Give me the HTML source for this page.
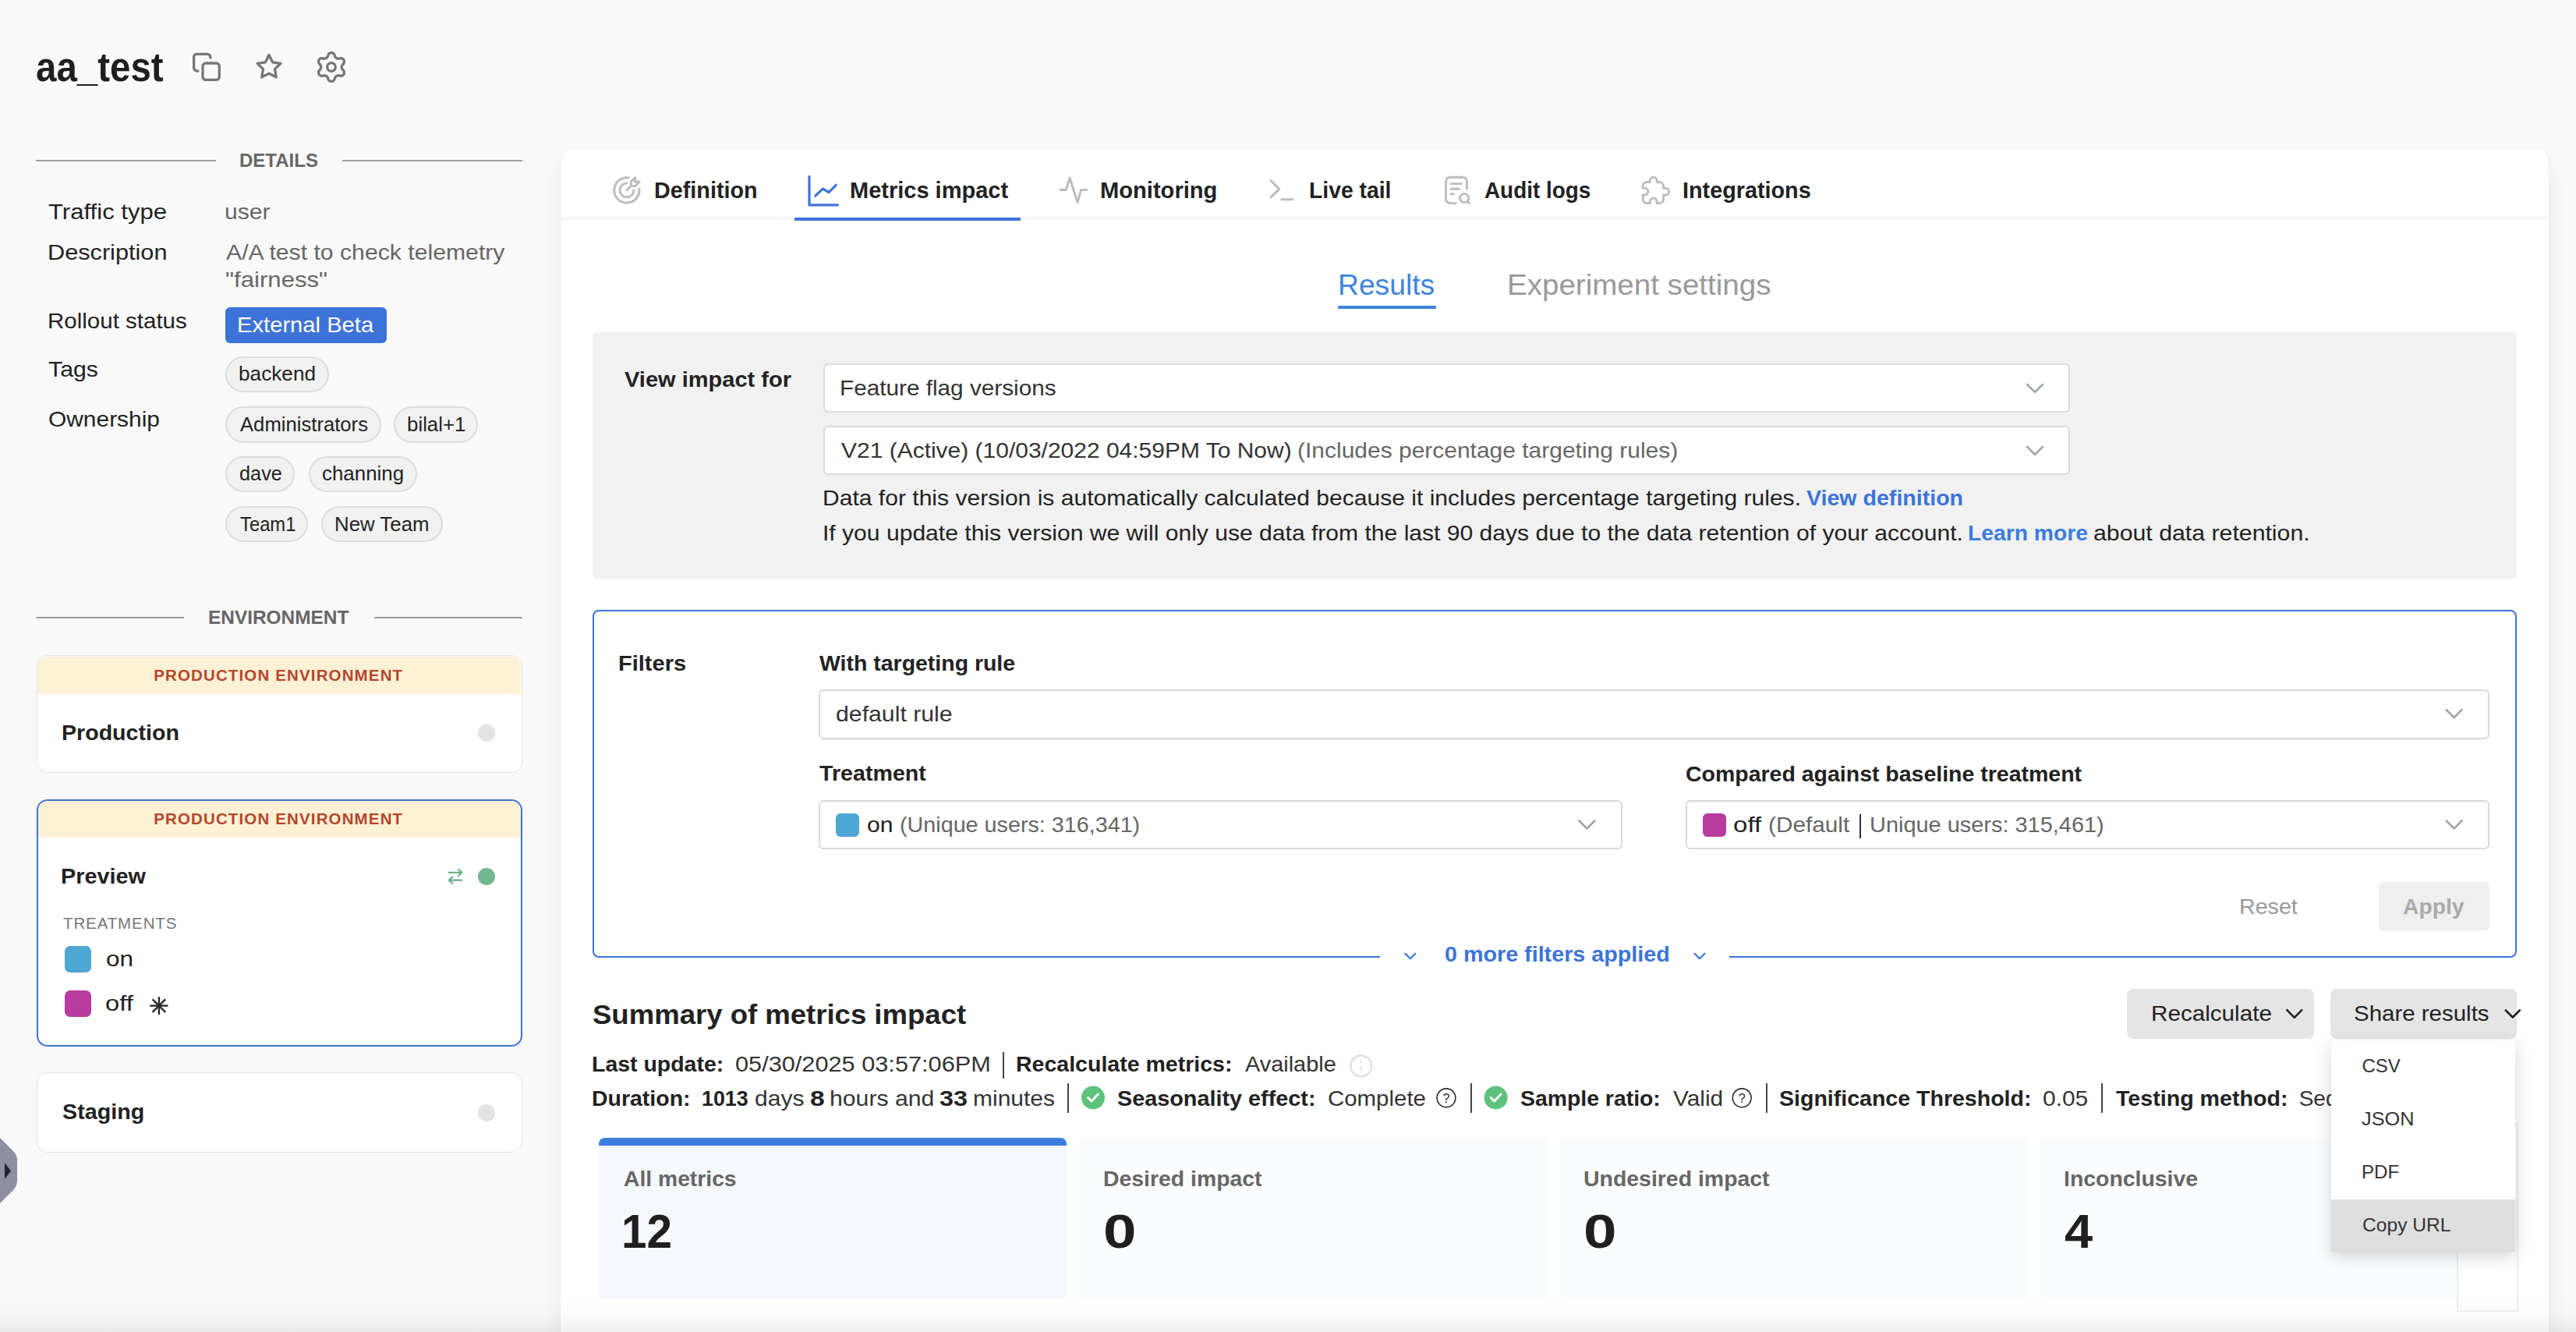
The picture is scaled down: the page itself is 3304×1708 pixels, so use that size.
<!DOCTYPE html>
<html><head><meta charset="utf-8"><title>aa_test</title>
<style>
html,body{margin:0;padding:0;}
body{width:3304px;height:1708px;overflow:hidden;position:relative;background:#f9f9f9;font-family:"Liberation Sans",sans-serif;}
.b{position:absolute;}
.t{position:absolute;white-space:pre;line-height:1;transform-origin:0 0;}
.ov{position:absolute;left:0;top:0;pointer-events:none;}
.fade{position:absolute;left:0;top:1662px;width:3304px;height:46px;background:linear-gradient(to bottom,rgba(0,0,0,0),rgba(0,0,0,0.01) 50%,rgba(0,0,0,0.058));}
</style></head><body>
<div class="b" style="left:717.5px;top:191.5px;width:2552.0px;height:1608.5px;background:#fff;border-left:1.5px solid #ececec;border-right:1.5px solid #ededed;box-sizing:border-box;border-radius:14px;box-shadow:0 24px 28px rgba(0,0,0,0.065);"></div><div class="b" style="left:46.0px;top:205.0px;width:231.0px;height:2.0px;background:#9c9c9c;"></div><div class="b" style="left:439.0px;top:205.0px;width:231.0px;height:2.0px;background:#9c9c9c;"></div><div class="b" style="left:46.0px;top:790.5px;width:190.0px;height:2.0px;background:#9c9c9c;"></div><div class="b" style="left:480.0px;top:790.5px;width:190.0px;height:2.0px;background:#9c9c9c;"></div><div class="b" style="left:289.0px;top:394.0px;width:207.0px;height:46.0px;background:#3d73d8;border-radius:6px;"></div><div class="b" style="left:289.0px;top:456.6px;width:132.6px;height:46.8px;background:#f1f1f1;border:2px solid #dcdcdc;border-radius:24px;box-sizing:border-box;"></div><div class="b" style="left:289.0px;top:520.5px;width:199.6px;height:47.2px;background:#f1f1f1;border:2px solid #dcdcdc;border-radius:24px;box-sizing:border-box;"></div><div class="b" style="left:505.4px;top:520.5px;width:107.2px;height:47.2px;background:#f1f1f1;border:2px solid #dcdcdc;border-radius:24px;box-sizing:border-box;"></div><div class="b" style="left:289.0px;top:584.5px;width:89.4px;height:46.9px;background:#f1f1f1;border:2px solid #dcdcdc;border-radius:24px;box-sizing:border-box;"></div><div class="b" style="left:395.5px;top:584.5px;width:139.9px;height:46.9px;background:#f1f1f1;border:2px solid #dcdcdc;border-radius:24px;box-sizing:border-box;"></div><div class="b" style="left:289.0px;top:648.5px;width:106.0px;height:46.8px;background:#f1f1f1;border:2px solid #dcdcdc;border-radius:24px;box-sizing:border-box;"></div><div class="b" style="left:412.3px;top:648.5px;width:155.3px;height:46.8px;background:#f1f1f1;border:2px solid #dcdcdc;border-radius:24px;box-sizing:border-box;"></div><div class="b" style="left:46.5px;top:840.0px;width:623.0px;height:151.3px;background:#fff;border:1.6px solid #e5e5e5;border-radius:14px;box-sizing:border-box;"></div><div class="b" style="left:48.0px;top:841.6px;width:620.0px;height:48.1px;background:#fdf1d5;border-radius:12.5px 12.5px 0 0;"></div><div class="b" style="left:46.5px;top:1024.5px;width:623.0px;height:317.0px;background:#fff;border:2px solid #3d73d8;border-radius:14px;box-sizing:border-box;"></div><div class="b" style="left:48.5px;top:1026.5px;width:619.0px;height:47.3px;background:#fdf1d5;border-radius:12px 12px 0 0;"></div><div class="b" style="left:46.5px;top:1374.5px;width:623.0px;height:103.5px;background:#fff;border:1.6px solid #e5e5e5;border-radius:14px;box-sizing:border-box;"></div><div class="b" style="left:613.2px;top:929.2px;width:21.6px;height:21.6px;background:#e3e3e3;border-radius:50%;"></div><div class="b" style="left:613.2px;top:1113.2px;width:21.6px;height:21.6px;background:#72b88e;border-radius:50%;"></div><div class="b" style="left:613.2px;top:1416.0px;width:21.6px;height:21.6px;background:#e3e3e3;border-radius:50%;"></div><div class="b" style="left:83.0px;top:1213.0px;width:34.0px;height:33.6px;background:#4fa7d3;border-radius:7px;"></div><div class="b" style="left:83.0px;top:1270.0px;width:34.0px;height:33.7px;background:#b83ba0;border-radius:7px;"></div><div class="b" style="left:719.0px;top:278.0px;width:2549.0px;height:4.0px;background:#f7f7f7;"></div><div class="b" style="left:1019.0px;top:279.0px;width:290.0px;height:3.5px;background:#3d73d8;"></div><div class="b" style="left:1715.5px;top:392.0px;width:126.1px;height:4.0px;background:#3f82dd;border-radius:2px 2px 0 0;"></div><div class="b" style="left:760.0px;top:425.8px;width:2468.0px;height:316.2px;background:#f1f1f1;border-radius:6px;"></div><div class="b" style="left:1056.0px;top:465.5px;width:1599.0px;height:63.5px;background:#fff;border:2px solid #dadada;border-radius:6px;box-sizing:border-box;"></div><div class="b" style="left:1056.0px;top:546.3px;width:1599.0px;height:62.7px;background:#fff;border:2px solid #dadada;border-radius:6px;box-sizing:border-box;"></div><div class="b" style="left:760.0px;top:782.3px;width:2468.0px;height:445.4px;border:2px solid #3d73d8;border-radius:8px;box-sizing:border-box;"></div><div class="b" style="left:1770.0px;top:1221.0px;width:447.6px;height:10.0px;background:#fff;"></div><div class="b" style="left:1049.8px;top:884.3px;width:2143.2px;height:64.0px;background:#fff;border:2px solid #dadada;border-radius:6px;box-sizing:border-box;"></div><div class="b" style="left:1049.8px;top:1026.0px;width:1031.2px;height:63.3px;background:#fff;border:2px solid #dadada;border-radius:6px;box-sizing:border-box;"></div><div class="b" style="left:2162.0px;top:1026.0px;width:1031.0px;height:63.3px;background:#fff;border:2px solid #dadada;border-radius:6px;box-sizing:border-box;"></div><div class="b" style="left:1072.0px;top:1042.9px;width:29.7px;height:29.9px;background:#4fa7d3;border-radius:6px;"></div><div class="b" style="left:2183.8px;top:1042.9px;width:30.2px;height:29.9px;background:#b83ba0;border-radius:6px;"></div><div class="b" style="left:2385.2px;top:1043.5px;width:2.2px;height:31.5px;background:#333;"></div><div class="b" style="left:3051.4px;top:1130.5px;width:141.6px;height:62.8px;background:#efefef;border-radius:6px;"></div><div class="b" style="left:2728.0px;top:1268.0px;width:240.0px;height:63.6px;background:#e5e5e5;border-radius:8px;"></div><div class="b" style="left:2988.5px;top:1268.0px;width:239.5px;height:63.6px;background:#e5e5e5;border-radius:8px;"></div><div class="b" style="left:1286.0px;top:1348.5px;width:2.0px;height:34.2px;background:#444;"></div><div class="b" style="left:1368.8px;top:1389.0px;width:2.0px;height:37.8px;background:#444;"></div><div class="b" style="left:1885.8px;top:1389.0px;width:2.0px;height:37.8px;background:#444;"></div><div class="b" style="left:2265.0px;top:1389.0px;width:2.0px;height:37.8px;background:#444;"></div><div class="b" style="left:2695.0px;top:1389.0px;width:2.0px;height:37.8px;background:#444;"></div><div class="b" style="left:768.0px;top:1459.2px;width:600.0px;height:207.2px;background:#f5f8fd;border-radius:8px;overflow:hidden;"></div><div class="b" style="left:768.0px;top:1459.2px;width:600.0px;height:10.0px;background:#3b7ddd;border-radius:8px 8px 0 0;"></div><div class="b" style="left:1384.0px;top:1459.2px;width:600.0px;height:207.2px;background:#fbfcfe;border-radius:8px;"></div><div class="b" style="left:2000.0px;top:1459.2px;width:600.0px;height:207.2px;background:#fbfcfe;border-radius:8px;"></div><div class="b" style="left:2616.0px;top:1459.2px;width:600.0px;height:207.2px;background:#fbfcfe;border-radius:8px;"></div><div class="b" style="left:3150.5px;top:1441.0px;width:79.1px;height:241.0px;background:#fff;border:2px solid #eeeeee;box-sizing:border-box;"></div>
<div class="t" style="left:46.1px;top:61.3px;font-size:51px;color:#1f1f1f;transform:scaleX(0.9310);font-weight:700;">aa_test</div><div class="t" style="left:307.0px;top:193.5px;font-size:24px;color:#666;font-weight:700;">DETAILS</div><div class="t" style="left:61.9px;top:258.0px;font-size:28px;color:#222;transform:scaleX(1.1111);">Traffic type</div><div class="t" style="left:60.8px;top:310.3px;font-size:28px;color:#222;transform:scaleX(1.0956);">Description</div><div class="t" style="left:60.9px;top:398.3px;font-size:28px;color:#222;transform:scaleX(1.0539);">Rollout status</div><div class="t" style="left:61.9px;top:459.9px;font-size:28px;color:#222;transform:scaleX(1.0807);">Tags</div><div class="t" style="left:61.9px;top:523.9px;font-size:28px;color:#222;transform:scaleX(1.0682);">Ownership</div><div class="t" style="left:287.8px;top:258.0px;font-size:28px;color:#666;transform:scaleX(1.0769);">user</div><div class="t" style="left:290.0px;top:310.3px;font-size:28px;color:#666;transform:scaleX(1.0783);">A/A test to check telemetry</div><div class="t" style="left:288.9px;top:345.0px;font-size:28px;color:#666;transform:scaleX(1.1121);">&quot;fairness&quot;</div><div class="t" style="left:303.6px;top:402.8px;font-size:28px;color:#fff;transform:scaleX(1.0422);">External Beta</div><div class="t" style="left:305.7px;top:467.1px;font-size:25.5px;color:#222;transform:scaleX(1.0269);">backend</div><div class="t" style="left:307.8px;top:532.0px;font-size:25.5px;color:#222;transform:scaleX(1.0062);">Administrators</div><div class="t" style="left:522.0px;top:532.0px;font-size:25.5px;color:#222;transform:scaleX(1.0141);">bilal+1</div><div class="t" style="left:306.8px;top:595.4px;font-size:25.5px;color:#222;transform:scaleX(0.9925);">dave</div><div class="t" style="left:413.4px;top:595.4px;font-size:25.5px;color:#222;transform:scaleX(1.0158);">channing</div><div class="t" style="left:307.8px;top:659.6px;font-size:25.5px;color:#222;transform:scaleX(0.9333);">Team1</div><div class="t" style="left:429.0px;top:659.6px;font-size:25.5px;color:#222;transform:scaleX(1.0128);">New Team</div><div class="t" style="left:266.8px;top:779.7px;font-size:24px;color:#666;transform:scaleX(1.0171);font-weight:700;">ENVIRONMENT</div><div class="t" style="left:197.2px;top:856.1px;font-size:20.5px;color:#b5462a;letter-spacing:1.14px;font-weight:700;">PRODUCTION ENVIRONMENT</div><div class="t" style="left:78.5px;top:926.1px;font-size:28px;color:#222;transform:scaleX(1.0208);font-weight:700;">Production</div><div class="t" style="left:197.2px;top:1039.9px;font-size:20.5px;color:#b5462a;letter-spacing:1.14px;font-weight:700;">PRODUCTION ENVIRONMENT</div><div class="t" style="left:78.4px;top:1110.2px;font-size:28px;color:#222;transform:scaleX(1.0288);font-weight:700;">Preview</div><div class="t" style="left:81.0px;top:1174.2px;font-size:20.5px;color:#777;letter-spacing:0.89px;">TREATMENTS</div><div class="t" style="left:135.5px;top:1216.0px;font-size:28px;color:#222;transform:scaleX(1.1250);">on</div><div class="t" style="left:135.4px;top:1273.1px;font-size:28px;color:#222;transform:scaleX(1.1667);">off</div><div class="t" style="left:79.5px;top:1412.1px;font-size:28px;color:#222;transform:scaleX(1.0250);font-weight:700;">Staging</div><div class="t" style="left:839.0px;top:229.5px;font-size:29px;color:#222;transform:scaleX(0.9923);font-weight:700;">Definition</div><div class="t" style="left:1090.0px;top:229.5px;font-size:29px;color:#222;font-weight:700;">Metrics impact</div><div class="t" style="left:1411.0px;top:229.5px;font-size:29px;color:#222;transform:scaleX(1.0041);font-weight:700;">Monitoring</div><div class="t" style="left:1679.0px;top:229.5px;font-size:29px;color:#222;transform:scaleX(0.9769);font-weight:700;">Live tail</div><div class="t" style="left:1904.0px;top:229.5px;font-size:29px;color:#222;transform:scaleX(0.9607);font-weight:700;">Audit logs</div><div class="t" style="left:2158.0px;top:229.5px;font-size:29px;color:#222;transform:scaleX(0.9920);font-weight:700;">Integrations</div><div class="t" style="left:1716.2px;top:347.5px;font-size:36px;color:#3e84dc;transform:scaleX(1.0345);">Results</div><div class="t" style="left:1932.8px;top:347.5px;font-size:36px;color:#999;transform:scaleX(1.0705);">Experiment settings</div><div class="t" style="left:801.0px;top:473.3px;font-size:28px;color:#222;transform:scaleX(1.0364);font-weight:700;">View impact for</div><div class="t" style="left:1076.9px;top:484.1px;font-size:28px;color:#333;transform:scaleX(1.0618);">Feature flag versions</div><div class="t" style="left:1079.0px;top:564.3px;font-size:28px;color:#333;transform:scaleX(1.0706);">V21 (Active) (10/03/2022 04:59PM To Now)</div><div class="t" style="left:1663.7px;top:564.3px;font-size:28px;color:#666;transform:scaleX(1.0706);">(Includes percentage targeting rules)</div><div class="t" style="left:1054.5px;top:624.6px;font-size:28px;color:#222;transform:scaleX(1.0737);">Data for this version is automatically calculated because it includes percentage targeting rules.</div><div class="t" style="left:2317.4px;top:624.6px;font-size:28px;color:#3b74d8;transform:scaleX(1.0204);font-weight:700;">View definition</div><div class="t" style="left:1054.5px;top:670.3px;font-size:28px;color:#222;transform:scaleX(1.0742);">If you update this version we will only use data from the last 90 days due to the data retention of your account.</div><div class="t" style="left:2524.0px;top:670.3px;font-size:28px;color:#3b7ddd;transform:scaleX(1.0100);font-weight:700;">Learn more</div><div class="t" style="left:2684.9px;top:670.3px;font-size:28px;color:#222;transform:scaleX(1.0810);">about data retention.</div><div class="t" style="left:792.9px;top:837.3px;font-size:28px;color:#222;transform:scaleX(1.0370);font-weight:700;">Filters</div><div class="t" style="left:1051.0px;top:836.8px;font-size:28px;color:#222;transform:scaleX(1.0163);font-weight:700;">With targeting rule</div><div class="t" style="left:1071.9px;top:902.1px;font-size:28px;color:#333;transform:scaleX(1.0803);">default rule</div><div class="t" style="left:1051.0px;top:978.1px;font-size:28px;color:#222;transform:scaleX(1.0224);font-weight:700;">Treatment</div><div class="t" style="left:1112.3px;top:1043.9px;font-size:28px;color:#222;transform:scaleX(1.0750);">on</div><div class="t" style="left:1153.6px;top:1043.9px;font-size:28px;color:#666;transform:scaleX(1.0259);">(Unique users: 316,341)</div><div class="t" style="left:2161.5px;top:979.3px;font-size:28px;color:#222;transform:scaleX(1.0171);font-weight:700;">Compared against baseline treatment</div><div class="t" style="left:2223.1px;top:1043.9px;font-size:28px;color:#222;transform:scaleX(1.1800);">off</div><div class="t" style="left:2267.7px;top:1043.9px;font-size:28px;color:#666;transform:scaleX(1.0625);">(Default</div><div class="t" style="left:2397.9px;top:1043.9px;font-size:28px;color:#666;transform:scaleX(1.0330);">Unique users: 315,461)</div><div class="t" style="left:2872.0px;top:1148.9px;font-size:28px;color:#999;transform:scaleX(1.0225);">Reset</div><div class="t" style="left:3082.0px;top:1148.9px;font-size:28px;color:#aaa;transform:scaleX(1.0091);font-weight:700;">Apply</div><div class="t" style="left:1853.0px;top:1210.0px;font-size:28px;color:#3b74d8;transform:scaleX(1.0251);font-weight:700;">0 more filters applied</div><div class="t" style="left:760.0px;top:1283.2px;font-size:35px;color:#222;transform:scaleX(1.0437);font-weight:700;">Summary of metrics impact</div><div class="t" style="left:2758.5px;top:1286.3px;font-size:28px;color:#222;transform:scaleX(1.0587);">Recalculate</div><div class="t" style="left:3019.4px;top:1286.3px;font-size:28px;color:#222;transform:scaleX(1.0521);">Share results</div><div class="t" style="left:759.0px;top:1351.2px;font-size:28px;color:#222;transform:scaleX(1.0167);font-weight:700;">Last update:</div><div class="t" style="left:942.9px;top:1351.2px;font-size:28px;color:#333;transform:scaleX(1.0966);">05/30/2025 03:57:06PM</div><div class="t" style="left:1302.6px;top:1351.2px;font-size:28px;color:#222;transform:scaleX(1.0187);font-weight:700;">Recalculate metrics:</div><div class="t" style="left:1596.8px;top:1351.2px;font-size:28px;color:#333;transform:scaleX(1.0321);">Available</div><div class="t" style="left:759.0px;top:1394.7px;font-size:28px;color:#222;transform:scaleX(1.0167);font-weight:700;">Duration:</div><div class="t" style="left:899.6px;top:1394.7px;font-size:28px;color:#222;transform:scaleX(0.9583);font-weight:700;">1013</div><div class="t" style="left:968.1px;top:1394.7px;font-size:28px;color:#333;transform:scaleX(1.0737);">days</div><div class="t" style="left:1038.5px;top:1394.7px;font-size:28px;color:#222;transform:scaleX(1.2000);font-weight:700;">8</div><div class="t" style="left:1063.8px;top:1394.7px;font-size:28px;color:#333;transform:scaleX(1.0785);">hours and</div><div class="t" style="left:1205.3px;top:1394.7px;font-size:28px;color:#222;transform:scaleX(1.1552);font-weight:700;">33</div><div class="t" style="left:1247.9px;top:1394.7px;font-size:28px;color:#333;transform:scaleX(1.0716);">minutes</div><div class="t" style="left:1433.0px;top:1394.7px;font-size:28px;color:#222;transform:scaleX(1.0287);font-weight:700;">Seasonality effect:</div><div class="t" style="left:1703.3px;top:1394.7px;font-size:28px;color:#333;transform:scaleX(1.0508);">Complete</div><div class="t" style="left:1949.7px;top:1394.7px;font-size:28px;color:#222;transform:scaleX(1.0138);font-weight:700;">Sample ratio:</div><div class="t" style="left:2145.7px;top:1394.7px;font-size:28px;color:#333;transform:scaleX(1.0655);">Valid</div><div class="t" style="left:2281.7px;top:1394.7px;font-size:28px;color:#222;transform:scaleX(1.0191);font-weight:700;">Significance Threshold:</div><div class="t" style="left:2619.9px;top:1394.7px;font-size:28px;color:#333;transform:scaleX(1.0679);">0.05</div><div class="t" style="left:2713.6px;top:1394.7px;font-size:28px;color:#222;transform:scaleX(1.0221);font-weight:700;">Testing method:</div><div class="t" style="left:2948.7px;top:1394.7px;font-size:28px;color:#333;">Sequential</div><div class="t" style="left:800.0px;top:1498.3px;font-size:28px;color:#666;transform:scaleX(1.0099);font-weight:700;">All metrics</div><div class="t" style="left:797.2px;top:1548.2px;font-size:62px;color:#1f1f1f;transform:scaleX(0.9444);font-weight:700;">12</div><div class="t" style="left:1415.0px;top:1498.3px;font-size:28px;color:#666;transform:scaleX(1.0141);font-weight:700;">Desired impact</div><div class="t" style="left:1414.5px;top:1548.2px;font-size:62px;color:#1f1f1f;transform:scaleX(1.2333);font-weight:700;">0</div><div class="t" style="left:2031.0px;top:1498.3px;font-size:28px;color:#666;transform:scaleX(1.0155);font-weight:700;">Undesired impact</div><div class="t" style="left:2030.5px;top:1548.2px;font-size:62px;color:#1f1f1f;transform:scaleX(1.2333);font-weight:700;">0</div><div class="t" style="left:2647.0px;top:1498.3px;font-size:28px;color:#666;transform:scaleX(1.0144);font-weight:700;">Inconclusive</div><div class="t" style="left:2648.0px;top:1548.2px;font-size:62px;color:#1f1f1f;transform:scaleX(1.0485);font-weight:700;">4</div>
<svg class="ov" width="3304" height="1708" viewBox="0 0 3304 1708"><path d="M2600.0 492.8 L2610.0 502.8 L2620.0 492.8" fill="none" stroke="#9aa1ad" stroke-width="2.6" stroke-linecap="round" stroke-linejoin="round"/><path d="M2600.0 572.8 L2610.0 582.8 L2620.0 572.8" fill="none" stroke="#9aa1ad" stroke-width="2.6" stroke-linecap="round" stroke-linejoin="round"/><path d="M3137.6 910.2 L3147.6 920.2 L3157.6 910.2" fill="none" stroke="#9aa1ad" stroke-width="2.6" stroke-linecap="round" stroke-linejoin="round"/><path d="M2025.4 1052.4 L2035.4 1062.4 L2045.4 1052.4" fill="none" stroke="#9aa1ad" stroke-width="2.6" stroke-linecap="round" stroke-linejoin="round"/><path d="M3137.6 1052.4 L3147.6 1062.4 L3157.6 1052.4" fill="none" stroke="#9aa1ad" stroke-width="2.6" stroke-linecap="round" stroke-linejoin="round"/><path d="M1802.3 1222.8 L1808.8 1229.2 L1815.3 1222.8" fill="none" stroke="#3b74d8" stroke-width="2.2" stroke-linecap="round" stroke-linejoin="round"/><path d="M2173.5 1222.8 L2180.0 1229.2 L2186.5 1222.8" fill="none" stroke="#3b74d8" stroke-width="2.2" stroke-linecap="round" stroke-linejoin="round"/><path d="M2933.3 1295.2 L2942.8 1304.8 L2952.3 1295.2" fill="none" stroke="#222" stroke-width="2.6" stroke-linecap="round" stroke-linejoin="round"/><path d="M3213.8 1295.5 L3222.8 1304.5 L3231.8 1295.5" fill="none" stroke="#222" stroke-width="2.6" stroke-linecap="round" stroke-linejoin="round"/><g fill="none" stroke="#777" stroke-width="3.3" stroke-linecap="round" stroke-linejoin="round"><rect x="260" y="81" width="21.3" height="21.4" rx="4"/><path d="M253.8 91 Q248.6 91 248.6 86 V73.5 Q248.6 69.3 253 69.3 H265.5 Q269.9 69.3 269.9 74"/></g><g transform="translate(327,67.5) scale(1.5)" fill="none" stroke="#777" stroke-width="2.2" stroke-linecap="round" stroke-linejoin="round"><path d="M12 17.75l-6.172 3.245l1.179 -6.873l-5 -4.867l6.9 -1l3.086 -6.253l3.086 6.253l6.9 1l-5 4.867l1.179 6.873z"/></g><path d="M438.20 86.00 L438.21 85.77 L438.23 85.54 L438.27 85.30 L438.33 85.07 L438.40 84.83 L438.48 84.58 L438.59 84.33 L438.70 84.07 L438.84 83.81 L438.98 83.53 L439.15 83.25 L439.34 82.95 L439.55 82.64 L439.81 82.31 L440.26 81.91 L440.70 81.50 L440.94 81.13 L441.11 80.76 L441.25 80.41 L441.35 80.05 L441.42 79.70 L441.47 79.35 L441.49 79.00 L441.48 78.66 L441.45 78.33 L441.39 78.00 L441.31 77.69 L441.21 77.38 L441.08 77.08 L440.93 76.80 L440.76 76.53 L440.57 76.27 L440.36 76.03 L440.12 75.80 L439.87 75.59 L439.60 75.40 L439.31 75.22 L439.00 75.06 L438.67 74.93 L438.33 74.82 L437.97 74.73 L437.59 74.66 L437.19 74.63 L436.75 74.65 L436.17 74.83 L435.60 75.02 L435.19 75.08 L434.81 75.11 L434.46 75.12 L434.13 75.12 L433.82 75.11 L433.52 75.10 L433.24 75.07 L432.97 75.03 L432.71 74.98 L432.47 74.92 L432.24 74.85 L432.02 74.77 L431.80 74.68 L431.60 74.57 L431.40 74.45 L431.22 74.31 L431.03 74.16 L430.86 73.99 L430.68 73.81 L430.51 73.61 L430.35 73.40 L430.18 73.17 L430.02 72.92 L429.86 72.66 L429.69 72.37 L429.53 72.06 L429.37 71.72 L429.21 71.33 L429.09 70.74 L428.95 70.15 L428.75 69.76 L428.52 69.43 L428.28 69.13 L428.02 68.86 L427.75 68.62 L427.47 68.41 L427.18 68.22 L426.89 68.06 L426.58 67.92 L426.27 67.80 L425.96 67.71 L425.64 67.65 L425.32 67.61 L425.00 67.60 L424.68 67.61 L424.36 67.65 L424.04 67.71 L423.73 67.80 L423.42 67.92 L423.11 68.06 L422.82 68.22 L422.53 68.41 L422.25 68.62 L421.98 68.86 L421.72 69.13 L421.48 69.43 L421.25 69.76 L421.05 70.15 L420.91 70.74 L420.79 71.33 L420.63 71.72 L420.47 72.06 L420.31 72.37 L420.14 72.66 L419.98 72.92 L419.82 73.17 L419.65 73.40 L419.49 73.61 L419.32 73.81 L419.14 73.99 L418.97 74.16 L418.78 74.31 L418.60 74.45 L418.40 74.57 L418.20 74.68 L417.98 74.77 L417.76 74.85 L417.53 74.92 L417.29 74.98 L417.03 75.03 L416.76 75.07 L416.48 75.10 L416.18 75.11 L415.87 75.12 L415.54 75.12 L415.19 75.11 L414.81 75.08 L414.40 75.02 L413.83 74.83 L413.25 74.65 L412.81 74.63 L412.41 74.66 L412.03 74.73 L411.67 74.82 L411.33 74.93 L411.00 75.06 L410.69 75.22 L410.40 75.40 L410.13 75.59 L409.88 75.80 L409.64 76.03 L409.43 76.27 L409.24 76.53 L409.07 76.80 L408.92 77.08 L408.79 77.38 L408.69 77.69 L408.61 78.00 L408.55 78.33 L408.52 78.66 L408.51 79.00 L408.53 79.35 L408.58 79.70 L408.65 80.05 L408.75 80.41 L408.89 80.76 L409.06 81.13 L409.30 81.50 L409.74 81.91 L410.19 82.31 L410.45 82.64 L410.66 82.95 L410.85 83.25 L411.02 83.53 L411.16 83.81 L411.30 84.07 L411.41 84.33 L411.52 84.58 L411.60 84.83 L411.67 85.07 L411.73 85.30 L411.77 85.54 L411.79 85.77 L411.80 86.00 L411.79 86.23 L411.77 86.46 L411.73 86.70 L411.67 86.93 L411.60 87.17 L411.52 87.42 L411.41 87.67 L411.30 87.93 L411.16 88.19 L411.02 88.47 L410.85 88.75 L410.66 89.05 L410.45 89.36 L410.19 89.69 L409.74 90.09 L409.30 90.50 L409.06 90.87 L408.89 91.24 L408.75 91.59 L408.65 91.95 L408.58 92.30 L408.53 92.65 L408.51 93.00 L408.52 93.34 L408.55 93.67 L408.61 94.00 L408.69 94.31 L408.79 94.62 L408.92 94.92 L409.07 95.20 L409.24 95.47 L409.43 95.73 L409.64 95.97 L409.88 96.20 L410.13 96.41 L410.40 96.60 L410.69 96.78 L411.00 96.94 L411.33 97.07 L411.67 97.18 L412.03 97.27 L412.41 97.34 L412.81 97.37 L413.25 97.35 L413.83 97.17 L414.40 96.98 L414.81 96.92 L415.19 96.89 L415.54 96.88 L415.87 96.88 L416.18 96.89 L416.48 96.90 L416.76 96.93 L417.03 96.97 L417.29 97.02 L417.53 97.08 L417.76 97.15 L417.98 97.23 L418.20 97.32 L418.40 97.43 L418.60 97.55 L418.78 97.69 L418.97 97.84 L419.14 98.01 L419.32 98.19 L419.49 98.39 L419.65 98.60 L419.82 98.83 L419.98 99.08 L420.14 99.34 L420.31 99.63 L420.47 99.94 L420.63 100.28 L420.79 100.67 L420.91 101.26 L421.05 101.85 L421.25 102.24 L421.48 102.57 L421.72 102.87 L421.98 103.14 L422.25 103.38 L422.53 103.59 L422.82 103.78 L423.11 103.94 L423.42 104.08 L423.73 104.20 L424.04 104.29 L424.36 104.35 L424.68 104.39 L425.00 104.40 L425.32 104.39 L425.64 104.35 L425.96 104.29 L426.27 104.20 L426.58 104.08 L426.89 103.94 L427.18 103.78 L427.47 103.59 L427.75 103.38 L428.02 103.14 L428.28 102.87 L428.52 102.57 L428.75 102.24 L428.95 101.85 L429.09 101.26 L429.21 100.67 L429.37 100.28 L429.53 99.94 L429.69 99.63 L429.86 99.34 L430.02 99.08 L430.18 98.83 L430.35 98.60 L430.51 98.39 L430.68 98.19 L430.86 98.01 L431.03 97.84 L431.22 97.69 L431.40 97.55 L431.60 97.43 L431.80 97.32 L432.02 97.23 L432.24 97.15 L432.47 97.08 L432.71 97.02 L432.97 96.97 L433.24 96.93 L433.52 96.90 L433.82 96.89 L434.13 96.88 L434.46 96.88 L434.81 96.89 L435.19 96.92 L435.60 96.98 L436.17 97.17 L436.75 97.35 L437.19 97.37 L437.59 97.34 L437.97 97.27 L438.33 97.18 L438.67 97.07 L439.00 96.94 L439.31 96.78 L439.60 96.60 L439.87 96.41 L440.12 96.20 L440.36 95.97 L440.57 95.73 L440.76 95.47 L440.93 95.20 L441.08 94.92 L441.21 94.62 L441.31 94.31 L441.39 94.00 L441.45 93.67 L441.48 93.34 L441.49 93.00 L441.47 92.65 L441.42 92.30 L441.35 91.95 L441.25 91.59 L441.11 91.24 L440.94 90.87 L440.70 90.50 L440.26 90.09 L439.81 89.69 L439.55 89.36 L439.34 89.05 L439.15 88.75 L438.98 88.47 L438.84 88.19 L438.70 87.93 L438.59 87.67 L438.48 87.42 L438.40 87.17 L438.33 86.93 L438.27 86.70 L438.23 86.46 L438.21 86.23 L438.20 86.00Z" fill="none" stroke="#777" stroke-width="3.3" stroke-linejoin="round"/><circle cx="425" cy="86" r="5.3" fill="none" stroke="#777" stroke-width="3.3"/><g transform="translate(782.4,222.4) scale(1.79)" fill="none" stroke="#bdbdbd" stroke-width="1.7" stroke-linecap="round" stroke-linejoin="round"><path d="M12 7a5 5 0 1 0 5 5"/><path d="M13 3.055a9 9 0 1 0 7.941 7.945"/><path d="M15 6v3h3l3 -3h-3v-3z"/><path d="M15 9l-3 3"/></g><g fill="none" stroke="#3d73d8" stroke-width="3.2" stroke-linecap="round" stroke-linejoin="round"><path d="M1038 226.4 V262.9 H1074.4"/><path d="M1045.8 251.1 L1055.4 242.1 L1063.2 246.5 L1072.2 237.3"/></g><path d="M1360 243.6 H1367.4 L1372.1 228.2 L1382 259.4 L1386.6 243.6 H1394.1" fill="none" stroke="#bdbdbd" stroke-width="3" stroke-linecap="round" stroke-linejoin="round"/><g fill="none" stroke="#bdbdbd" stroke-width="3" stroke-linecap="round" stroke-linejoin="round"><path d="M1630.1 231.8 L1640.7 242.4 L1630.1 252.9"/><path d="M1643.8 255.7 H1658.1"/></g><g fill="none" stroke="#bdbdbd" stroke-width="2.9" stroke-linecap="round" stroke-linejoin="round"><path d="M1867.3 260.6 H1860.5 Q1854.5 260.6 1854.5 254.6 V233.3 Q1854.5 227.3 1860.5 227.3 H1875.4 Q1881.4 227.3 1881.4 233.3 V242"/><path d="M1861.2 235.6 H1874.5"/><path d="M1861.2 242.3 H1871.5"/><path d="M1861.2 248.9 H1864.5"/><circle cx="1878.1" cy="254" r="5.6"/><path d="M1882.2 258.1 L1884.6 260.5"/></g><path d="M2107.2 238.5 A5 5 0 0 1 2112.2 233.5 H2116.3 V231.6 A4.4 4.4 0 0 1 2125.1 231.6 V233.5 H2128.5 A5 5 0 0 1 2133.5 238.5 V241.2 H2136.3 A4.4 4.4 0 0 1 2136.3 250 H2133.5 V255.5 A5 5 0 0 1 2128.5 260.5 H2125.1 V258.4 A4.4 4.4 0 0 0 2116.3 258.4 V260.5 H2112.2 A5 5 0 0 1 2107.2 255.5 V250 H2109.5 A4.4 4.4 0 0 0 2109.5 241.2 H2107.2 Z" fill="none" stroke="#bdbdbd" stroke-width="2.9" stroke-linejoin="round"/><g fill="none" stroke="#6ab38a" stroke-width="2.3" stroke-linecap="round" stroke-linejoin="round"><path d="M575.9 1118.9 H592.2 M588 1114.8 L592.2 1118.9 L588 1123"/><path d="M592.2 1128.6 H575.9 M580.1 1124.5 L575.9 1128.6 L580.1 1132.7"/></g><g stroke="#2a2a2a" stroke-width="2.4" stroke-linecap="butt"><path d="M203.9 1278.2 V1301"/><path d="M192.3 1289.6 H215.5"/><path d="M195.6 1281.3 L212.2 1297.9"/><path d="M195.6 1297.9 L212.2 1281.3"/></g><circle cx="1745.7" cy="1366.9" r="13.4" fill="none" stroke="#e0e0e0" stroke-width="2.3"/><path d="M1745.7 1367.4 V1372.8" stroke="#e0e0e0" stroke-width="2.3" stroke-linecap="butt"/><circle cx="1745.7" cy="1361.7" r="1.35" fill="#e0e0e0"/><circle cx="1402" cy="1407.5" r="15" fill="#5cc27c"/><path d="M1395.5 1407.5 L1400 1412 L1408.5 1403" fill="none" stroke="#fff" stroke-width="3" stroke-linecap="round" stroke-linejoin="round"/><circle cx="1918.6" cy="1407.5" r="15" fill="#5cc27c"/><path d="M1912.1 1407.5 L1916.6 1412 L1925.1 1403" fill="none" stroke="#fff" stroke-width="3" stroke-linecap="round" stroke-linejoin="round"/><circle cx="1855.0" cy="1407.8" r="11.9" fill="none" stroke="#2a2a2a" stroke-width="1.6"/><text x="1855.0" y="1414" text-anchor="middle" font-family="Liberation Sans" font-size="16" fill="#2a2a2a">?</text><circle cx="2234.2000000000003" cy="1407.8" r="11.9" fill="none" stroke="#2a2a2a" stroke-width="1.6"/><text x="2234.2000000000003" y="1414" text-anchor="middle" font-family="Liberation Sans" font-size="16" fill="#2a2a2a">?</text><path d="M0 1459 L17 1476 Q22 1481 22 1488 V1514 Q22 1521 17 1526 L0 1543 Z" fill="#8f8fa1"/><path d="M6 1491 L14 1501.5 L6 1512 Z" fill="#1c2433"/></svg>
<div class="b" style="left:2989.7px;top:1333.7px;width:236.8px;height:272.1px;background:#fff;border-radius:4px;box-shadow:0 6px 22px rgba(0,0,0,0.16);overflow:hidden;"></div><div class="b" style="left:2989.7px;top:1538.4px;width:236.8px;height:67.4px;background:#dedede;border-radius:0 0 3px 3px;"></div>
<div class="t" style="left:3029.5px;top:1354.7px;font-size:24px;color:#333;">CSV</div><div class="t" style="left:3029.4px;top:1423.1px;font-size:24px;color:#333;transform:scaleX(1.0541);">JSON</div><div class="t" style="left:3028.5px;top:1491.1px;font-size:24px;color:#333;transform:scaleX(1.0067);">PDF</div><div class="t" style="left:3029.5px;top:1559.1px;font-size:24px;color:#333;transform:scaleX(1.0257);">Copy URL</div>
<div class="fade"></div>
</body></html>
